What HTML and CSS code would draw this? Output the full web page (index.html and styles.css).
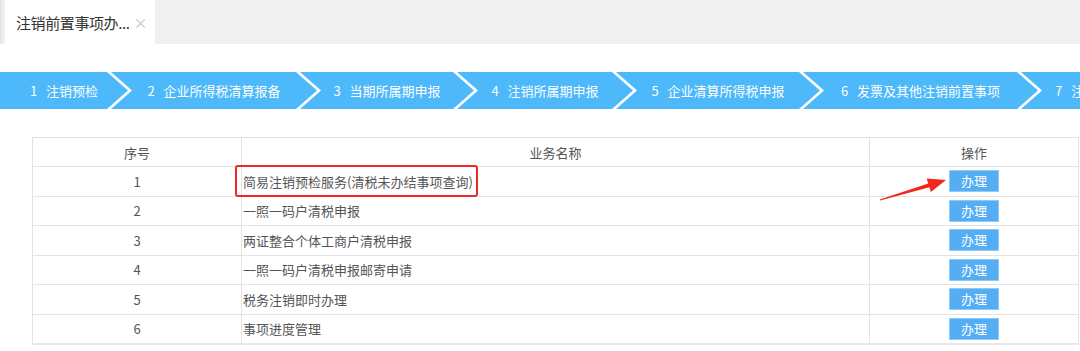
FILE: index.html
```html
<!DOCTYPE html>
<html lang="zh">
<head>
<meta charset="utf-8">
<link rel="stylesheet" href="styles.css">
</head>
<body>
<div class="tabbar">
  <div class="tab"><span class="tab-title">注销前置事项办...</span><span class="tab-close">×</span></div>
</div>

<div class="steps">
  <div class="step s1"><span class="num">1</span>注销预检</div>
  <div class="step s2"><span class="num">2</span>企业所得税清算报备</div>
  <div class="step s3"><span class="num">3</span>当期所属期申报</div>
  <div class="step s4"><span class="num">4</span>注销所属期申报</div>
  <div class="step s5"><span class="num">5</span>企业清算所得税申报</div>
  <div class="step s6"><span class="num">6</span>发票及其他注销前置事项</div>
  <div class="step s7"><span class="num">7</span>注销</div>
</div>

<div class="table-wrap">
  <table class="grid">
    <colgroup><col class="c1"><col class="c2"><col class="c3"></colgroup>
    <thead>
      <tr><th>序号</th><th>业务名称</th><th>操作</th></tr>
    </thead>
    <tbody>
      <tr><td class="no">1</td><td class="name"><span class="hl">简易注销预检服务(清税未办结事项查询)</span></td><td class="op"><svg class="arrow" width="80" height="40" viewBox="0 0 80 40"><polygon points="9.85,32.5 58.2,16.4 56.7,11.6 76,13 60.9,25 59.4,20.2 10.15,33.5" fill="#f2261c"/></svg><button class="btn">办理</button></td></tr>
      <tr><td class="no">2</td><td class="name">一照一码户清税申报</td><td class="op"><button class="btn">办理</button></td></tr>
      <tr><td class="no">3</td><td class="name">两证整合个体工商户清税申报</td><td class="op"><button class="btn">办理</button></td></tr>
      <tr><td class="no">4</td><td class="name">一照一码户清税申报邮寄申请</td><td class="op"><button class="btn">办理</button></td></tr>
      <tr><td class="no">5</td><td class="name">税务注销即时办理</td><td class="op"><button class="btn">办理</button></td></tr>
      <tr><td class="no">6</td><td class="name">事项进度管理</td><td class="op"><button class="btn">办理</button></td></tr>
    </tbody>
  </table>
</div>
</body>
</html>
```

FILE: styles.css
```css
* { box-sizing: border-box; }
html, body { margin: 0; padding: 0; }
body {
  width: 1080px;
  height: 351px;
  overflow: hidden;
  background: #fff;
  font-family: "Noto Sans CJK SC", "Noto Sans", sans-serif;
  color: #555;
}

.tabbar {
  height: 44px;
  background: #f0f0f0;
  display: flex;
  padding-left: 3px;
  border-left: 2px solid #e6e6e6;
}
.tab {
  width: 150px;
  height: 44px;
  background: #fff;
  display: flex;
  align-items: center;
  padding-left: 11px;
  font-size: 15px;
  color: #333;
}
.tab-title { letter-spacing: -0.4px; }
.tab-close {
  margin-left: 4px;
  color: #c4c4c4;
  font-size: 14px;
}

.steps {
  margin-top: 28px;
  display: flex;
  height: 37px;
  overflow: hidden;
  white-space: nowrap;
}
.step {
  flex: none;
  height: 37px;
  background: #4db8fa;
  color: #fff;
  font-size: 13px;
  display: flex;
  align-items: center;
  justify-content: center;
  padding: 0 21px;
  margin-left: -17px;
  clip-path: polygon(0 0, calc(100% - 21px) 0, 100% 50%, calc(100% - 21px) 100%, 0 100%, 21px 50%);
}
.step .num { margin-right: 9px; }
.s1 { width: 128px; margin-left: 0; clip-path: polygon(0 0, calc(100% - 21px) 0, 100% 50%, calc(100% - 21px) 100%, 0 100%); }
.s2 { width: 206px; }
.s3 { width: 174px; }
.s4 { width: 176px; }
.s5 { width: 204px; }
.s6 { width: 235px; }
.s7 { width: 120px; justify-content: flex-start; padding-left: 34px; }

.table-wrap {
  margin-top: 28px;
  padding-left: 32px;
}
.grid {
  width: 1046px;
  border-collapse: collapse;
  table-layout: fixed;
  font-size: 13px;
  color: #555;
}
.c1 { width: 209px; }
.c2 { width: 628px; }
.c3 { width: 209px; }
.grid th, .grid td {
  border: 1px solid #e3e3e3;
  height: 29.5px;
  padding: 0;
  font-weight: normal;
  text-align: center;
  vertical-align: middle;
}
.grid th { height: 29px; }
.grid tbody tr:last-child td { border-bottom: 2px solid #e8e8e8; }
.grid td.name { text-align: left; padding-left: 1px; }
.grid td.op { position: relative; }

.hl { position: relative; }
.hl::after {
  content: "";
  position: absolute;
  left: -8px;
  right: -5px;
  top: -7px;
  bottom: -6px;
  border: 2px solid #ec2a22;
  border-radius: 3px;
}

.btn {
  width: 50px;
  height: 22px;
  border: 1px solid #8ccaf8;
  background: #55adf4;
  color: #fff;
  font-family: inherit;
  font-size: 13px;
  padding: 0;
  line-height: 20px;
  display: inline-block;
  vertical-align: middle;
  cursor: pointer;
}

.arrow {
  position: absolute;
  left: 0;
  top: 0;
  overflow: visible;
}
```
